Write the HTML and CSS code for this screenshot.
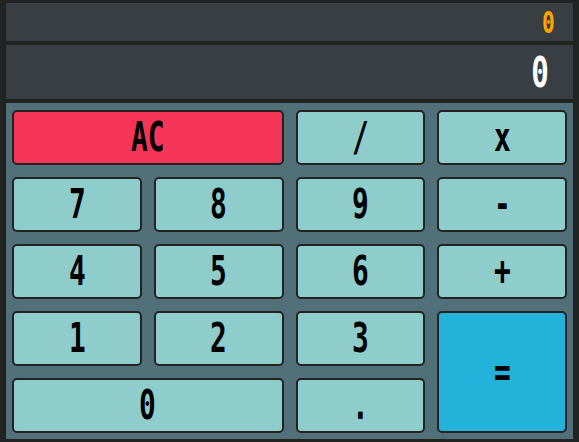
FILE: index.html
```html
<!DOCTYPE html>
<html>
<head>
<meta charset="utf-8">
<link rel="stylesheet" href="styles.css">
</head>
<body>
<div class="calc">
  <div class="display display-prev"><span class="lbl">0</span></div>
  <div class="display display-cur"><span class="lbl">0</span></div>
  <div class="keypad">
    <button class="key key-ac span2"><span class="lbl">AC</span></button>
    <button class="key"><span class="lbl">/</span></button>
    <button class="key"><span class="lbl">x</span></button>
    <button class="key"><span class="lbl">7</span></button>
    <button class="key"><span class="lbl">8</span></button>
    <button class="key"><span class="lbl">9</span></button>
    <button class="key"><span class="lbl">-</span></button>
    <button class="key"><span class="lbl">4</span></button>
    <button class="key"><span class="lbl">5</span></button>
    <button class="key"><span class="lbl">6</span></button>
    <button class="key"><span class="lbl">+</span></button>
    <button class="key"><span class="lbl">1</span></button>
    <button class="key"><span class="lbl">2</span></button>
    <button class="key"><span class="lbl">3</span></button>
    <button class="key key-eq rspan2"><span class="lbl">=</span></button>
    <button class="key span2"><span class="lbl">0</span></button>
    <button class="key"><span class="lbl">.</span></button>
  </div>
</div>
</body>
</html>
```
FILE: styles.css
```css
html, body {
  margin: 0;
  padding: 0;
  background: #222323;
}
.calc {
  width: 579px;
  height: 442px;
  box-sizing: border-box;
  padding: 3px 6px 3px 6px;
  display: flex;
  flex-direction: column;
  gap: 4px;
  background: #222323;
  font-family: "DejaVu Sans Mono", monospace;
}
.display {
  background: #383e41;
  display: flex;
  align-items: center;
  justify-content: flex-end;
  box-sizing: border-box;
  font-weight: bold;
}
.display .lbl {
  display: inline-block;
  transform: scaleX(0.68);
  transform-origin: right center;
  line-height: 1;
}
.display-prev {
  height: 38px;
  padding-right: 18px;
  color: #ffa500;
  font-size: 31px;
}
.display-cur {
  height: 54px;
  padding-right: 24px;
  color: #ffffff;
  font-size: 43px;
}
.keypad {
  flex: 1;
  background: #51707a;
  padding: 7px 6px 6px 6px;
  display: grid;
  grid-template-columns: repeat(4, 1fr);
  grid-template-rows: repeat(5, 55px);
  gap: 12px;
}
.key {
  margin: 0;
  padding: 0;
  border: 2px solid #222323;
  border-radius: 5px;
  background: #8ecdcb;
  color: #000;
  font-family: "DejaVu Sans Mono", monospace;
  font-weight: bold;
  font-size: 41px;
  display: flex;
  align-items: center;
  justify-content: center;
}
.key .lbl {
  display: inline-block;
  transform: scaleX(0.68);
  line-height: 1;
}
.key-ac {
  background: #f43557;
}
.key-eq {
  background: #23b2d9;
}
.span2 {
  grid-column: span 2;
}
.rspan2 {
  grid-row: span 2;
}
```
